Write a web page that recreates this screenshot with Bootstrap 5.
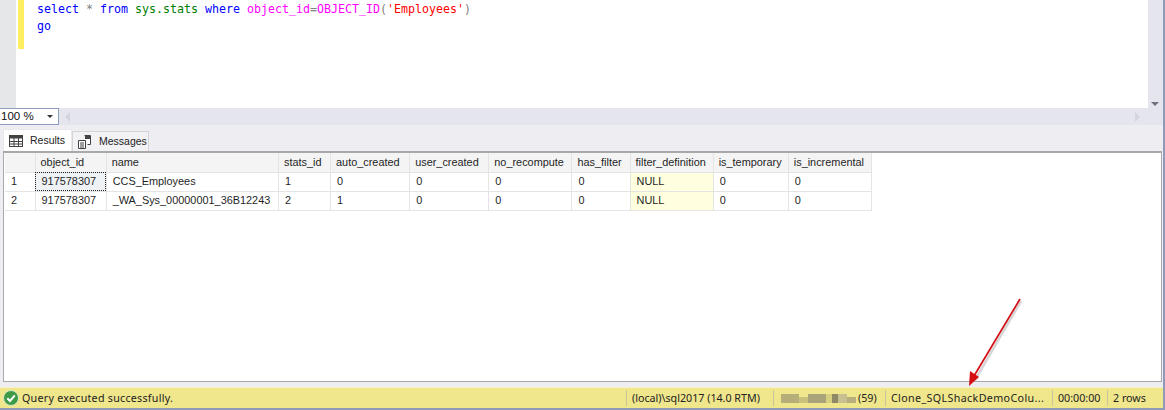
<!DOCTYPE html>
<html lang="en">
<head>
<meta charset="utf-8">
<title>Query results</title>
<link href="https://cdn.jsdelivr.net/npm/bootstrap@5.3.0/dist/css/bootstrap.min.css" rel="stylesheet">
<style>
html,body{height:410px;overflow:hidden;background:#eeeef2;}
body{font-family:"Liberation Sans",Arial,sans-serif;font-size:11px;color:#222;position:relative;border-right:2px solid #8e9ab8;width:1165px;}
.shell{height:410px;}
.editor-zone{height:108px;}
.gutter{width:16px;background:#e6e7e8;flex:none;}
.sql-pane{background:#fff;padding-left:2px;}
.change-bar{width:6px;height:49px;background:#ffee62;flex:none;}
.sql{font-family:"DejaVu Sans Mono",monospace;font-size:11.63px;line-height:17px;padding:1px 0 0 13px;white-space:pre;color:#000;margin:0;background:transparent;border:0;overflow:hidden;}
.k{color:#0000ff}.g{color:#008000}.m{color:#ff00ff}.s{color:#ff0000}.o{color:#808080}
.v-rail{width:15px;background:#e5e6ed;position:relative;flex:none;}
.arrow-down{position:absolute;left:3px;bottom:2px;width:0;height:0;border-left:4px solid transparent;border-right:4px solid transparent;border-top:4px solid #6d7180;}
.zoom-row{height:17px;background:#e5e6ed;}
.zoom-box{width:59px;height:17px;background:#fff;border:1px solid #8c9dbd;border-left:0;padding:0 0 0 1px;line-height:15px;font-size:11.5px;color:#111;position:relative;flex:none;}
.zoom-caret{position:absolute;right:5px;top:6px;border-left:3px solid transparent;border-right:3px solid transparent;border-top:3px solid #333;}
.tri-left{width:0;height:0;border-top:5px solid transparent;border-bottom:5px solid transparent;border-right:5px solid #d3d5de;margin-left:6px;}
.tri-right{width:0;height:0;border-top:5px solid transparent;border-bottom:5px solid transparent;border-left:5px solid #d3d5de;margin-right:23px;}
.tab-row{height:26px;padding:4px 0 0 3px;background:#eeeef2;}
.tab-item{display:flex;align-items:center;font-size:10.5px;color:#222;border:1px solid #d5d5d9;border-bottom:0;}
.tab-on{width:69px;height:22px;gap:7px;padding-left:5px;background:#fff;border-color:#e8e8ec;}
.tab-off{width:77px;height:20px;margin-top:2px;gap:7px;padding-left:4px;background:#f2f2f5;}
.grid-pane{height:231px;margin:0 1px 0 3px;background:#fff;border:1px solid #a9a9a9;border-top:2px solid #a9a9a9;}
.res-table{table-layout:fixed;width:867px;margin:0 0 0 1px;border-collapse:collapse;font-size:10.9px;line-height:12px;}
.res-table th,.res-table td{font-weight:400;padding:0 0 0 5px;white-space:nowrap;overflow:hidden;border-right:1px solid #e4e4e4;border-bottom:1px solid #e4e4e4;color:#1f1f1f;height:19px;vertical-align:middle;}
.res-table th{background:#f4f4f4;height:19px;}
.res-table td{background:#fff;padding-left:6px;padding-bottom:2px;}
.res-table td.rh{padding-left:6px;background:#fff;}
.res-table td.nl{background:#ffffe0;}
.res-table td.cur{background:#eef2f5;outline:1px dotted #222;outline-offset:-1px;}
.status{height:23px;background:#f0e68c;border-top:1px solid #f7f3c8;border-bottom:2px solid #8e9ab8;font-family:"Noto Sans",sans-serif;font-size:10.7px;color:#222;padding-left:3px;margin-top:5px;}
.status-msg{letter-spacing:.26px;margin-left:3px;}
.cell{border-left:1px solid #c8c39a;padding:0 0 0 5px;height:16px;line-height:16px;white-space:nowrap;flex:none;}
.cell-wide{letter-spacing:.37px;}
.blur-name{width:75px;height:10px;flex:none;margin-left:2px;margin-right:-2px;}
.arrow-over{position:absolute;left:950px;top:290px;pointer-events:none;}
</style>
</head>
<body>
<div class="shell d-flex flex-column">
  <div class="editor-zone d-flex">
    <div class="gutter"></div>
    <div class="sql-pane flex-grow-1 d-flex">
      <div class="change-bar"></div>
      <pre class="sql"><span class="k">select</span> <span class="o">*</span> <span class="k">from</span> <span class="g">sys.stats</span> <span class="k">where</span> <span class="m">object_id</span><span class="o">=</span><span class="m">OBJECT_ID</span><span class="o">(</span><span class="s">'Employees'</span><span class="o">)</span>
<span class="k">go</span></pre>
    </div>
    <div class="v-rail"><span class="arrow-down"></span></div>
  </div>
  <div class="zoom-row d-flex align-items-center">
    <div class="zoom-box">100 %<span class="zoom-caret"></span></div>
    <span class="tri-left"></span>
    <span class="flex-grow-1"></span>
    <span class="tri-right"></span>
  </div>
  <div class="tab-row d-flex">
    <div class="tab-item tab-on">
      <svg width="14" height="12" viewBox="0 0 14 12" aria-hidden="true"><rect x=".5" y=".5" width="13" height="11" fill="#fff" stroke="#424242"/><path d="M1 1h12v2.500H1z" fill="#424242"/><path d="M.5 6.500h13M.5 9h13M5 1v10M9.500 1v10" stroke="#424242" fill="none"/></svg>
      <span>Results</span>
    </div>
    <div class="tab-item tab-off">
      <svg width="15" height="14" viewBox="0 0 15 14" aria-hidden="true"><path d="M1.500 5.500h7v8h-7z" fill="#fff" stroke="#424242"/><path d="M3 8h4M3 10h4M3 12h4" stroke="#424242"/><path d="M7.500 .5h6v9h-3" fill="#fff" stroke="#424242"/><path d="M8 1h5v3H8z" fill="#424242"/></svg>
      <span>Messages</span>
    </div>
  </div>
  <div class="grid-pane">
    <table class="res-table">
      <colgroup><col style="width:30px"><col style="width:71px"><col style="width:172px"><col style="width:52px"><col style="width:79px"><col style="width:79px"><col style="width:83px"><col style="width:58px"><col style="width:83px"><col style="width:75px"><col style="width:83px"></colgroup>
      <thead><tr><th></th><th>object_id</th><th>name</th><th>stats_id</th><th>auto_created</th><th>user_created</th><th>no_recompute</th><th>has_filter</th><th>filter_definition</th><th>is_temporary</th><th>is_incremental</th></tr></thead>
      <tbody>
        <tr><td class="rh">1</td><td class="cur">917578307</td><td>CCS_Employees</td><td>1</td><td>0</td><td>0</td><td>0</td><td>0</td><td class="nl">NULL</td><td>0</td><td>0</td></tr>
        <tr><td class="rh">2</td><td>917578307</td><td>_WA_Sys_00000001_36B12243</td><td>2</td><td>1</td><td>0</td><td>0</td><td>0</td><td class="nl">NULL</td><td>0</td><td>0</td></tr>
      </tbody>
    </table>
  </div>
  <div class="status d-flex align-items-center">
    <svg width="16" height="16" viewBox="0 0 16 16" aria-hidden="true"><circle cx="8" cy="8" r="7.500" fill="#3e9a45" stroke="#d8e8c8"/><path d="M4.300 8.200l2.700 2.800 4.800-5.700" fill="none" stroke="#fff" stroke-width="2"/></svg>
    <span class="status-msg flex-grow-1">Query executed successfully.</span>
    <span class="cell" style="width:147px">(local)\sql2017 (14.0 RTM)</span>
    <span class="cell d-flex align-items-center gap-1" style="width:112px">
      <svg class="blur-name" viewBox="0 0 25 3" shape-rendering="crispEdges" aria-hidden="true">
        <path d="M0 0h6v3H0z" fill="#b6ae78"/><path d="M6 1h3v2H6z" fill="#c9c17c"/><path d="M9 0h6v3H9z" fill="#aaa278"/><path d="M15 0h2v3h-2z" fill="#d8cf80"/><path d="M17 0h2v3h-2z" fill="#8f8966"/><path d="M19 0h3v3h-3z" fill="#c8c090"/><path d="M22 1h3v2h-3z" fill="#b6ae7c"/>
      </svg>
      <span>(59)</span>
    </span>
    <span class="cell cell-wide" style="width:167px">Clone_SQLShackDemoColu...</span>
    <span class="cell" style="width:55px">00:00:00</span>
    <span class="cell" style="width:56px">2 rows</span>
  </div>
</div>
<svg class="arrow-over" width="90" height="100" viewBox="0 0 90 100" aria-hidden="true">
  <path d="M71 11L25 90" stroke="#999" stroke-width="2.500" opacity=".4" fill="none"/>
  <path d="M70 9L24 86" stroke="#d40d12" stroke-width="1.700" fill="none"/>
  <path d="M19 96L20 81L29 87z" fill="#d40d12"/>
</svg>
</body>
</html>
